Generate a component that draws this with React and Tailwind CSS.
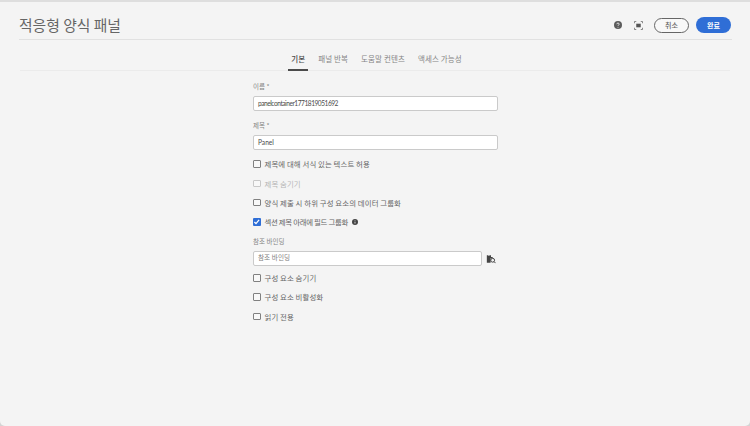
const FONT = "font-['Noto_Sans_CJK_KR','Noto_Sans',sans-serif]"

function CheckRow({ label, checked, disabled, children }) {
  return (
    <div className="flex h-[19.3px] items-center">
      {checked ? (
        <span className="flex h-[7.5px] w-[7.5px] items-center justify-center rounded-[1px] bg-[#2f6ed6]">
          <svg viewBox="0 0 8 8" className="h-[7.5px] w-[7.5px]" fill="none" stroke="#fff" strokeWidth="1.4">
            <path d="M1.5 4.2 3.2 6 6.5 2" />
          </svg>
        </span>
      ) : (
        <span className={`h-[7.5px] w-[7.5px] rounded-[1px] border ${disabled ? 'border-[#c8c8c8]' : 'border-[#808080]'} bg-[#f8f8f8]`} />
      )}
      <span className={`ml-[4px] text-[7.4px] leading-none ${checked ? 'tracking-[-0.3px]' : 'tracking-[0.1px]'} ${disabled ? 'text-[#b4b4b4]' : 'text-[#666]'}`}>{label}</span>
      {children}
    </div>
  )
}

function Field({ label, value, placeholder, tight }) {
  return (
    <div>
      <div className="h-[14px] text-[6.5px] leading-[9px] text-[#858585]">{label}</div>
      <div className={`flex h-[15px] items-center rounded-[2px] border border-[#cacaca] bg-white px-[4px] text-[6.6px] font-['Lato','Noto_Sans_CJK_KR',sans-serif] ${tight ? 'tracking-[-0.47px]' : ''} ${placeholder ? 'text-[#808080]' : 'text-[#4b4b4b]'}`}>
        {value || placeholder}
      </div>
    </div>
  )
}

export default function App() {
  return (
    <div className="h-[426px] w-[750px] overflow-hidden bg-[#d4d4d4]">
      <div className={`${FONT} h-full w-full overflow-hidden rounded-b-[5px] bg-[#f4f4f4]`}>
        <div className="h-[2px] bg-[#dedede]" />
        <header className="mr-[18px] ml-[19px] flex h-[38px] items-center justify-between border-b border-[#e1e1e1] pt-[9px] pr-[1px]">
          <h1 className="text-[14.8px] leading-none font-normal text-[#666]">적응형 양식 패널</h1>
          <div className="flex items-center">
            <svg viewBox="0 0 10 10" className="h-[8px] w-[8px]">
              <circle cx="5" cy="5" r="5" fill="#5c5c5c" />
              <path d="M3.5 4c0-2 3-2 3 0 0 1-1.5 1-1.5 2" fill="none" stroke="#fff" strokeWidth="1" />
              <circle cx="5" cy="7.8" r=".6" fill="#fff" />
            </svg>
            <svg viewBox="0 0 10 10" className="ml-[12px] h-[9px] w-[9px]" fill="none" stroke="#777" strokeWidth="1">
              <path d="M.5 2.5v-2h2M7.5.5h2v2M9.5 7.5v2h-2M2.5 9.5h-2v-2" />
              <rect x="2.5" y="3" width="5" height="4" fill="#555" stroke="none" />
            </svg>
            <button className="ml-[11px] h-[15px] w-[35px] rounded-full border border-[#666] bg-[#f8f8f8] text-[7px] leading-none font-medium text-[#666]">취소</button>
            <button className="ml-[7px] h-[16px] w-[35px] rounded-full bg-[#2f6ed6] text-[7px] leading-none font-bold text-white">완료</button>
          </div>
        </header>
        <nav className="mx-[20px] flex h-[31px] justify-center gap-[7px] border-b border-[#ebebeb] pt-[8px] pl-[3px] text-[7.5px] tracking-[0.1px] text-[#858585]">
          <div className="-mb-px flex items-center border-b-2 border-[#4b4b4b] px-[3px] font-medium text-[#4b4b4b]">기본</div>
          <div className="flex items-center px-[3px]">패널 반복</div>
          <div className="flex items-center px-[3px]">도움말 컨텐츠</div>
          <div className="flex items-center px-[3px]">액세스 가능성</div>
        </nav>
        <main className="ml-[253px] w-[245px] pt-[11px]">
          <Field label="이름 *" value="panelcontainer1771819051692" tight />
          <div className="mt-[10px]">
            <Field label="제목 *" value="Panel" />
          </div>
          <div className="mt-[4.5px]">
            <CheckRow label="제목에 대해 서식 있는 텍스트 허용" />
            <CheckRow label="제목 숨기기" disabled />
            <CheckRow label="양식 제출 시 하위 구성 요소의 데이터 그룹화" />
            <CheckRow label="섹션 제목 아래에 필드 그룹화" checked>
              <svg viewBox="0 0 10 10" className="ml-[4px] h-[6px] w-[6px]">
                <circle cx="5" cy="5" r="5" fill="#444" />
                <path d="M5 4.4v3.2" stroke="#fff" strokeWidth="1.3" />
                <circle cx="5" cy="2.7" r=".8" fill="#fff" />
              </svg>
            </CheckRow>
          </div>
          <div className="mt-[5px] flex items-end">
            <div className="w-[229px]">
              <Field label="참조 바인딩" placeholder="참조 바인딩" />
            </div>
            <svg viewBox="0 0 12 12" className="mb-[2px] ml-[4px] h-[10px] w-[10px]" fill="none">
              <path d="M1 1.5h2v1h1v-1h2v2h2v1.5H5.5V10.5H1z" fill="#444" />
              <circle cx="8" cy="7.5" r="2.3" stroke="#444" strokeWidth="1.2" />
              <path d="m9.7 9.2 1.8 1.8" stroke="#444" strokeWidth="1.2" />
            </svg>
          </div>
          <div className="mt-[2.5px]">
            <CheckRow label="구성 요소 숨기기" />
            <CheckRow label="구성 요소 비활성화" />
            <CheckRow label="읽기 전용" />
          </div>
        </main>
      </div>
    </div>
  )
}
